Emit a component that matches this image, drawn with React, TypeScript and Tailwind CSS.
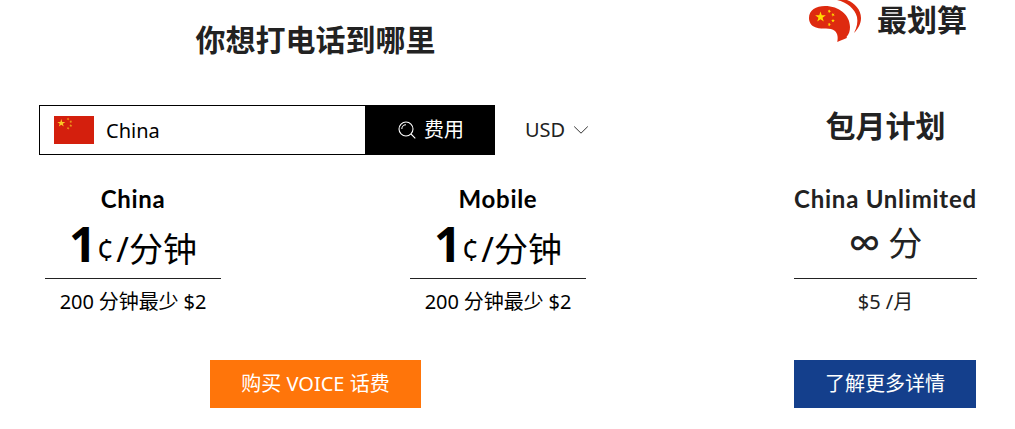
import React from 'react';

const STAR = '0,-1 0.225,-0.309 0.951,-0.309 0.363,0.118 0.588,0.809 0,0.382 -0.588,0.809 -0.363,0.118 -0.951,-0.309 -0.225,-0.309';

interface StarProps {
  x: number;
  y: number;
  r: number;
  fill: string;
  turn?: number;
}

function Star({ x, y, r, fill, turn = 0 }: StarProps) {
  return <polygon points={STAR} fill={fill} transform={`translate(${x} ${y}) rotate(${turn}) scale(${r})`} />;
}

function Flag() {
  return (
    <svg width="40" height="28" viewBox="0 0 40 28" className="shrink-0">
      <rect width="40" height="28" fill="#d41f0d" />
      <Star x={7.3} y={7.2} r={4.2} fill="#fbc925" />
      <Star x={14} y={3} r={1.6} fill="#f0a01e" turn={20} />
      <Star x={16.8} y={5.7} r={1.6} fill="#f0a01e" turn={45} />
      <Star x={16.8} y={9.6} r={1.6} fill="#f0a01e" />
      <Star x={14} y={12.3} r={1.6} fill="#f0a01e" turn={20} />
    </svg>
  );
}

function BubbleLogo() {
  return (
    <svg width="52" height="42" viewBox="0 0 52 42" className="shrink-0">
      <path
        d="M0 18C0 10 7 6 16 6C30 6 41 15 41 27C41 31 40 34 37.5 37C38 37.3 38 37.7 37.7 38C35 39.5 31 40.5 28.3 42C29 38 29 34 26 31C21 27 14 30 7 27.5C2 26 0 22 0 18Z"
        fill="#de2a0f"
      />
      <path d="M28 0H38C46 3 52 10 52 18C52 24 49 29 45 33C48 27 49 22 48 17C46 9 38 2 28 0Z" fill="#de2a0f" />
      <Star x={11.5} y={17} r={5.6} fill="#ffde00" />
      <Star x={20.3} y={11.3} r={2} fill="#ffde00" turn={20} />
      <Star x={24} y={14.8} r={2} fill="#ffde00" turn={45} />
      <Star x={24} y={20.7} r={2} fill="#ffde00" />
      <Star x={20.3} y={24.6} r={2} fill="#ffde00" turn={20} />
    </svg>
  );
}

function SearchIcon() {
  return (
    <svg width="18" height="18" viewBox="0 0 18 18" fill="none" stroke="white" strokeWidth="1.1">
      <circle cx="8" cy="8" r="7" />
      <path d="M13 13L17.3 17.3M3.8 8A4.2 4.2 0 0 1 8 3.8" />
    </svg>
  );
}

function Rate({ label }: { label: string }) {
  return (
    <div className="w-[176px] text-center text-black">
      <h3 className="h-[30px] font-['Lato'] text-2xl leading-[29px] font-bold tracking-[0.7px]">{label}</h3>
      <div className="flex h-[65px] items-baseline justify-center border-b border-[#222] whitespace-nowrap">
        <span className="text-[48px] leading-[60px] font-bold">1</span>
        <span className="text-[34px] leading-[60px]">
          <span className="mr-0.5 align-[1px] font-['Open_Sans'] text-[31px] leading-none">¢</span>/分钟
        </span>
      </div>
      <p className="mt-2 text-xl leading-[30px] tracking-[-0.1px] whitespace-nowrap">200 分钟最少 $2</p>
    </div>
  );
}

export default function App() {
  return (
    <main className="flex h-[429px] w-[1015px] overflow-hidden bg-white pl-[39px] font-['Noto_Sans','Noto_Sans_CJK_SC',sans-serif] text-[#222]">
      <section className="flex w-[553px] flex-col">
        <h2 className="mt-5 h-10 text-center text-[30px] leading-10 font-bold">你想打电话到哪里</h2>

        <div className="mt-[45px] flex h-[50px] items-center">
          <div className="flex h-full w-[326px] items-center border border-r-0 border-black pl-3.5 text-xl text-black">
            <Flag />
            <span className="mt-px ml-3">China</span>
          </div>
          <button className="flex h-full w-[130px] items-center justify-center gap-2 bg-black pl-0.5 text-xl text-white">
            <SearchIcon />
            费用
          </button>
          <div className="ml-[30px] flex items-center gap-2 text-xl">
            USD
            <svg width="16" height="10" viewBox="0 0 16 10" fill="none" stroke="#333" className="shrink-0">
              <path d="M1.2 1.5L8 8.2L14.8 1.5" />
            </svg>
          </div>
        </div>

        <div className="mt-[29px] flex justify-between px-1.5">
          <Rate label="China" />
          <Rate label="Mobile" />
        </div>

        <button className="mt-[43px] h-12 w-[211px] self-center bg-[#ff750a] text-xl text-white">购买 VOICE 话费</button>
      </section>

      <section className="ml-[202px] w-[183px] text-center">
        <div className="flex h-[42px] items-center gap-4 pl-[15px]">
          <BubbleLogo />
          <h2 className="-mt-0.5 text-[30px] leading-10 font-bold whitespace-nowrap">最划算</h2>
        </div>
        <h2 className="mt-16 h-10 text-[30px] leading-10 font-bold">包月计划</h2>

        <h3 className="mt-[38px] h-[30px] font-['Lato'] text-2xl leading-[29px] font-bold tracking-[0.75px] whitespace-nowrap">China Unlimited</h3>
        <div className="flex h-[65px] items-baseline justify-center gap-2 border-b border-[#222] text-[34px] leading-[51px]">
          <span className="font-['Lato'] text-[43px]">∞</span>
          <span>分</span>
        </div>
        <p className="mt-2 text-xl leading-[30px]">$5 /月</p>
        <button className="mt-[43px] block h-12 w-[182px] bg-[#143f8c] text-xl text-white">了解更多详情</button>
      </section>
    </main>
  );
}
